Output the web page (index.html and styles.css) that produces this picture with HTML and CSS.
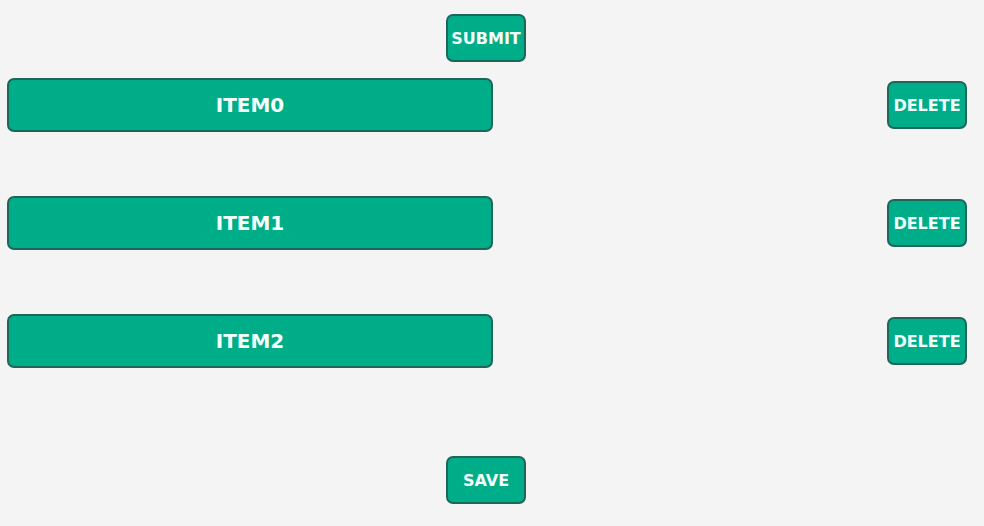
FILE: index.html
```html
<!DOCTYPE html>
<html>
<head>
<meta charset="utf-8">
<link rel="stylesheet" href="styles.css">
</head>
<body>
<main class="page">
  <button class="btn btn-submit">SUBMIT</button>
  <ul class="list">
    <li class="row"><div class="item">ITEM0</div><button class="btn">DELETE</button></li>
    <li class="row"><div class="item">ITEM1</div><button class="btn">DELETE</button></li>
    <li class="row"><div class="item">ITEM2</div><button class="btn">DELETE</button></li>
  </ul>
  <button class="btn btn-save">SAVE</button>
</main>
</body>
</html>
```
FILE: styles.css
```css
html, body {
  margin: 0;
  padding: 0;
  background: #f4f4f4;
}
.page {
  width: 960px;
  margin-left: 7px;
  padding-top: 14px;
  display: flex;
  flex-direction: column;
  font-family: "DejaVu Sans", Verdana, sans-serif;
}
.btn {
  width: 80px;
  height: 48px;
  box-sizing: border-box;
  background: #00ad89;
  border: 2px solid #1d675a;
  border-radius: 7px;
  color: #f4fffb;
  font-family: "DejaVu Sans", Verdana, sans-serif;
  font-weight: bold;
  font-size: 16px;
  padding: 0;
  display: flex;
  align-items: center;
  justify-content: center;
}
.btn-submit, .btn-save {
  margin-left: 439px;
}
.list {
  list-style: none;
  margin: 16px 0 0 0;
  padding: 0;
  display: flex;
  flex-direction: column;
  gap: 64px;
}
.row {
  display: flex;
  justify-content: space-between;
  align-items: center;
}
.item {
  width: 486px;
  height: 54px;
  box-sizing: border-box;
  background: #00ad89;
  border: 2px solid #1d675a;
  border-radius: 7px;
  color: #f4fffb;
  font-weight: bold;
  font-size: 20px;
  display: flex;
  align-items: center;
  justify-content: center;
}
.btn-save {
  margin-top: 88px;
}
```
